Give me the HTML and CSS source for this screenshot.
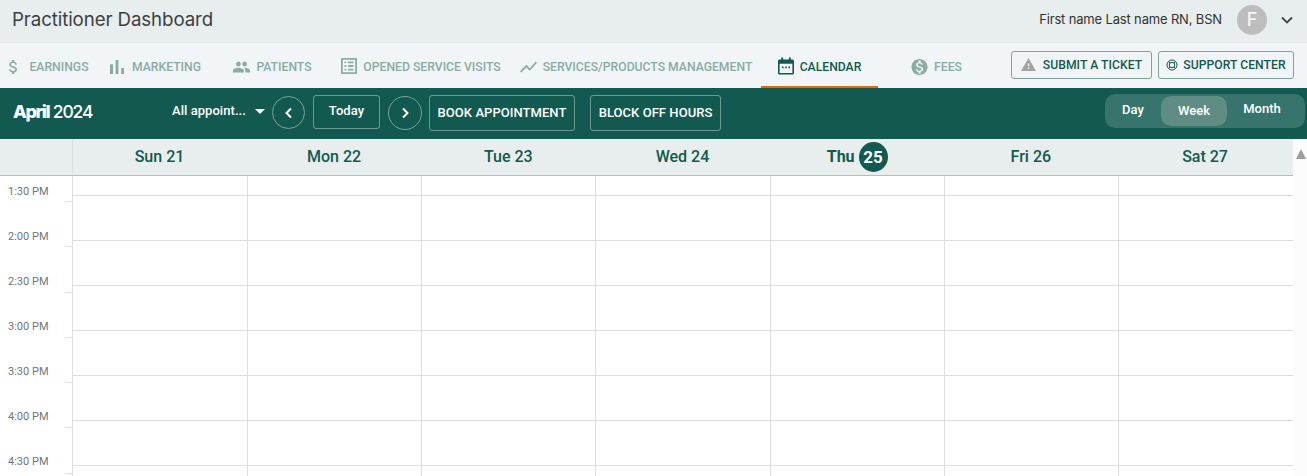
FILE: index.html
```html
<!DOCTYPE html>
<html lang="en">
<head>
<meta charset="utf-8">
<title>Practitioner Dashboard</title>
<link rel="stylesheet" href="styles.css">
</head>
<body>
<header class="topbar">
  <h1 class="title">Practitioner Dashboard</h1>
  <div class="user">
    <span class="user-name">First name Last name RN, BSN</span>
    <span class="avatar">F</span>
    <svg class="chev" viewBox="0 0 12 8"><path d="M1 1.500l5 5 5-5" fill="none" stroke="#444" stroke-width="1.800"/></svg>
  </div>
</header>
<nav class="nav">
  <div class="tabs">
    <a class="tab"><svg class="ic ic-money" viewBox="5 2 14 20"><path d="M11.800 10.900c-2.270-.59-3-1.200-3-2.150 0-1.090 1.010-1.850 2.700-1.850 1.780 0 2.440.85 2.500 2.100h2.210c-.07-1.720-1.120-3.300-3.210-3.810V3h-3v2.160c-1.940.42-3.500 1.680-3.500 3.610 0 2.310 1.910 3.460 4.700 4.130 2.500.6 3 1.480 3 2.410 0 .69-.49 1.790-2.700 1.790-2.060 0-2.870-.92-2.980-2.100h-2.200c.12 2.190 1.760 3.420 3.680 3.830V21h3v-2.150c1.950-.37 3.500-1.500 3.500-3.550 0-2.840-2.430-3.810-4.700-4.400z"/></svg>EARNINGS</a>
    <a class="tab"><svg class="ic ic-bars" viewBox="5 5 14 14"><path d="M5 9.200h3V19H5zM10.600 5h2.800v14h-2.800zm5.600 8H19v6h-2.800z"/></svg>MARKETING</a>
    <a class="tab"><svg class="ic" viewBox="1 5 22 14"><path d="M16 11c1.660 0 2.990-1.340 2.990-3S17.660 5 16 5c-1.660 0-3 1.340-3 3s1.340 3 3 3zm-8 0c1.660 0 2.990-1.340 2.990-3S9.660 5 8 5C6.340 5 5 6.340 5 8s1.340 3 3 3zm0 2c-2.330 0-7 1.170-7 3.500V19h14v-2.500c0-2.330-4.670-3.500-7-3.500zm8 0c-.29 0-.62.02-.97.05 1.160.84 1.970 1.970 1.970 3.450V19h6v-2.500c0-2.330-4.670-3.500-7-3.500z"/></svg>PATIENTS</a>
    <a class="tab"><svg class="ic ic-list" viewBox="3 3 18 18"><path d="M19 5v14H5V5h14m1.100-2H3.900c-.5 0-.9.4-.9.9v16.200c0 .4.4.9.9.9h16.200c.4 0 .9-.5.9-.9V3.900c0-.5-.5-.9-.9-.9zM11 7h6v2h-6V7zm0 4h6v2h-6v-2zm0 4h6v2h-6zM7 7h2v2H7zm0 4h2v2H7zm0 4h2v2H7z"/></svg>OPENED SERVICE VISITS</a>
    <a class="tab"><svg class="ic" viewBox="2 5 20 14"><path d="M3.500 18.490l6-6.010 4 4L22 6.920l-1.410-1.410-7.090 7.970-4-4L2 16.990z"/></svg>SERVICES/PRODUCTS MANAGEMENT</a>
    <a class="tab tab-active"><svg class="ic" viewBox="2 1.500 20 21.500"><path d="M6 1.500h2.400V4h7.200V1.500h2.400V4H20c1.100 0 2 .9 2 2v15c0 1.100-.9 2-2 2H4c-1.100 0-2-.9-2-2V6c0-1.100.9-2 2-2h2zM4 9.500V21h16V9.500zM7 13h2v2H7zm4 0h2v2h-2zm4 0h2v2h-2z"/></svg>CALENDAR</a>
    <a class="tab"><svg class="ic" viewBox="2 2 20 20"><path d="M12 2C6.480 2 2 6.480 2 12s4.480 10 10 10 10-4.480 10-10S17.520 2 12 2zm1.410 16.090V20h-2.670v-1.930c-1.710-.36-3.160-1.460-3.270-3.400h1.960c.1 1.050.82 1.870 2.650 1.870 1.960 0 2.400-.98 2.400-1.590 0-.83-.44-1.610-2.670-2.140-2.480-.6-4.180-1.620-4.180-3.670 0-1.720 1.390-2.840 3.110-3.210V4h2.670v1.950c1.860.45 2.790 1.860 2.850 3.390H14.300c-.05-1.110-.64-1.870-2.220-1.870-1.500 0-2.400.68-2.400 1.640 0 .84.65 1.390 2.670 1.910s4.180 1.390 4.180 3.910c-.01 1.830-1.380 2.830-3.120 3.160z"/></svg>FEES</a>
  </div>
  <div class="nav-actions">
    <a class="support-btn"><svg class="ic-warn" viewBox="1 2 22 19"><path d="M1 21h22L12 2 1 21zm12-3h-2v-2h2v2zm0-4h-2v-4h2v4z"/></svg>SUBMIT A TICKET</a>
    <a class="support-btn support-center"><svg class="ic-ring" viewBox="0 0 24 24"><circle cx="12" cy="12" r="10"/><circle cx="12" cy="12" r="5.500"/><path d="M5 5l3.200 3.200M19 5l-3.200 3.200M5 19l3.200-3.200M19 19l-3.200-3.200"/></svg>SUPPORT CENTER</a>
  </div>
</nav>
<section class="toolbar">
  <div class="month"><b>April</b> 2024</div>
  <div class="filter">All appoint...<span class="caret"></span></div>
  <button class="round"><svg viewBox="0 0 10 14"><path d="M7 2.500L2.500 7 7 11.500" fill="none" stroke="#fff" stroke-width="2"/></svg></button>
  <button class="btn btn-today">Today</button>
  <button class="round round-next"><svg viewBox="0 0 10 14"><path d="M3 2.500L7.500 7 3 11.500" fill="none" stroke="#fff" stroke-width="2"/></svg></button>
  <button class="btn btn-book">BOOK APPOINTMENT</button>
  <button class="btn btn-block">BLOCK OFF HOURS</button>
  <div class="views">
    <span class="view view-day">Day</span>
    <span class="view view-week">Week</span>
    <span class="view view-month">Month</span>
  </div>
</section>
<main class="calendar">
  <div class="cal-main">
    <div class="days">
      <div class="corner"></div>
      <div class="day">Sun 21</div>
      <div class="day">Mon 22</div>
      <div class="day">Tue 23</div>
      <div class="day">Wed 24</div>
      <div class="day day-today">Thu <span class="today-num">25</span></div>
      <div class="day">Fri 26</div>
      <div class="day">Sat 27</div>
    </div>
    <div class="grid">
      <div class="gutter">
        <div class="labels">
          <div class="slot">1:30 PM</div>
          <div class="slot">2:00 PM</div>
          <div class="slot">2:30 PM</div>
          <div class="slot">3:00 PM</div>
          <div class="slot">3:30 PM</div>
          <div class="slot">4:00 PM</div>
          <div class="slot">4:30 PM</div>
        </div>
        <div class="ticks">
          <div class="tick"></div><div class="tick"></div><div class="tick"></div><div class="tick"></div><div class="tick"></div><div class="tick"></div><div class="tick"></div>
        </div>
      </div>
      <div class="col"></div><div class="col"></div><div class="col"></div><div class="col"></div><div class="col"></div><div class="col"></div><div class="col"></div>
    </div>
  </div>
  <aside class="scrollbar"><span class="scroll-up"></span></aside>
</main>
</body>
</html>
```
FILE: styles.css
```css
* { box-sizing: border-box; }
html, body { margin: 0; height: 476px; overflow: hidden; background: #fff; }
body { font-family: Roboto, sans-serif; color: #125a50; }

.topbar { height: 43px; background: #e8eded; display: flex; align-items: flex-start; justify-content: space-between; box-shadow: inset 0 -2px 2px -1px #dfe4e4; }
.title { margin: 8px 0 0 12px; font: 400 18.7px/24px Inter, sans-serif; color: #3c3f44; letter-spacing: -.1px; }
.user { display: flex; align-items: center; margin: 5px 14px 0 0; }
.user-name { font: 400 13px/20px Inter, sans-serif; color: #333; letter-spacing: -.16px; margin-right: 15px; margin-top: -3px; }
.avatar { width: 30px; height: 30px; border-radius: 50%; background: #bdbdbd; color: #f4f4f4; font: 500 18px/30px Inter, sans-serif; text-align: center; margin-right: 14px; }
.chev { width: 12px; height: 8px; }

.nav { height: 45px; background: #f1f5f7; display: flex; justify-content: space-between; }
.tabs { display: grid; grid-template-columns: 97px 117px 117px 180px 250px 117px 117px; }
.tab { display: flex; align-items: center; justify-content: center; gap: 6px; font: 500 12.2px/16px Roboto, sans-serif; color: #8aaca4; height: 45px; padding-top: 3px; white-space: nowrap; }
.ic { width: 17px; height: 16px; fill: #8aaca4; flex: none; }
.ic-money { width: 11px; height: 18px; margin-right: 4px; }
.ic-bars { width: 14px; height: 16px; margin-right: 2px; }
.ic-list { width: 16px; height: 16px; margin-top: -2px; }
.tab-active { color: #125a50; border-bottom: 2px solid #e36c0a; padding-top: 4px; }
.tab-active .ic { fill: #125a50; width: 16px; height: 18px; margin-top: -2px; }
.nav-actions { display: flex; gap: 6px; padding: 8px 13px 0 0; }
.support-btn { height: 28px; width: 141px; border: 1px solid #7fa39b; border-radius: 3px; display: flex; align-items: center; justify-content: center; gap: 7px; font: 500 12.15px/16px Roboto, sans-serif; color: #125a50; letter-spacing: .05px; }
.support-center { width: 136px; gap: 5px; }
.ic-warn { width: 15px; height: 13px; fill: #a3a3a3; margin-top: -2px; }
.ic-ring { width: 12px; height: 12px; fill: none; stroke: #125a50; stroke-width: 2; }

.toolbar { height: 51px; background: #125a50; display: flex; align-items: flex-start; color: #fff; position: relative; }
.month { margin: 12px 0 0 13px; width: 159px; font: 500 17.5px/24px Inter, sans-serif; letter-spacing: -1.1px; color: #fff; }
.month b { font-size: 18px; font-weight: 800; letter-spacing: -1.400px; }
.filter { margin-top: 15px; width: 100px; font: 500 13px/16px Roboto, sans-serif; display: flex; align-items: center; white-space: nowrap; letter-spacing: .05px; }
.caret { width: 0; height: 0; border: 5px solid transparent; border-top-color: #fff; border-bottom: 0; margin-left: 9px; }
.round { width: 33px; height: 33px; margin-top: 8px; border: 1px solid #7fa39b; border-radius: 50%; background: none; padding: 0; display: flex; align-items: center; justify-content: center; }
.round svg { width: 10px; height: 14px; }
.round-next { width: 34px; height: 34px; margin-left: 8px; margin-right: 7px; }
.btn { background: none; border: 1px solid #6f9a92; border-radius: 3px; color: #fff; font: 500 13px/16px Roboto, sans-serif; padding: 0; margin-top: 7px; height: 36px; letter-spacing: .05px; }
.btn-today { width: 67px; height: 34px; margin-left: 8px; padding-bottom: 3px; }
.btn-book { width: 146px; }
.btn-block { width: 131px; margin-left: 15px; }
.views { width: 200px; height: 34px; margin: 6px 2px 0 auto; background: #37746b; border-radius: 10px; display: flex; align-items: flex-start; font: 500 13px/16px Roboto, sans-serif; padding-left: 7px; }
.view { height: 30px; display: flex; align-items: center; justify-content: center; }
.view-day { width: 42px; margin: 1px 7px 0 0; }
.view-week { width: 66px; margin-top: 2px; background: #5f8d85; border-radius: 10px; }
.view-month { width: 70px; }

.calendar { display: flex; height: 337px; }
.cal-main { width: 1293px; flex: none; overflow: hidden; }
.scrollbar { flex: 1; background: #fcfcfc; position: relative; }
.scroll-up { position: absolute; left: 3px; top: 10px; width: 0; height: 0; border-left: 5.500px solid transparent; border-right: 5.500px solid transparent; border-bottom: 10px solid #9e9e9e; }

.days { height: 37px; display: grid; grid-template-columns: 73px 175px repeat(6, 174.2px); background: #e8eded; border-bottom: 1px solid #b9bcbc; }
.corner { border-right: 1px solid #dcdfdf; }
.day { display: flex; align-items: center; justify-content: center; gap: 4px; padding-right: 2px; font: 500 16px/20px Roboto, sans-serif; color: #125a50; }
.day-today { font-weight: 700; gap: 4px; padding-right: 1px; }
.today-num { width: 29px; height: 30px; border-radius: 50%; background: #125a50; color: #fff; font: 700 17px/30px Roboto, sans-serif; text-align: center; }

.grid { display: grid; grid-template-columns: 73px 175px repeat(6, 174.2px); height: 300px; overflow: hidden; }
.gutter { border-right: 1px solid #dedede; display: grid; grid-template-rows: 300px; }
.labels, .ticks { grid-area: 1 / 1; }
.slot { height: 45px; padding: 9px 0 0 8px; font: 400 11px/14px Roboto, sans-serif; color: #6f7579; }
.ticks { padding-top: 25px; }
.tick { height: 45.300px; width: 7px; margin-left: 65px; border-top: 1px solid #dedede; }
.col { border-right: 1px solid #dedede; background: repeating-linear-gradient(transparent 0 19px, #dedede 19px 20px, transparent 20px 45px); }
.col:last-child { border-right: 0; }
```
